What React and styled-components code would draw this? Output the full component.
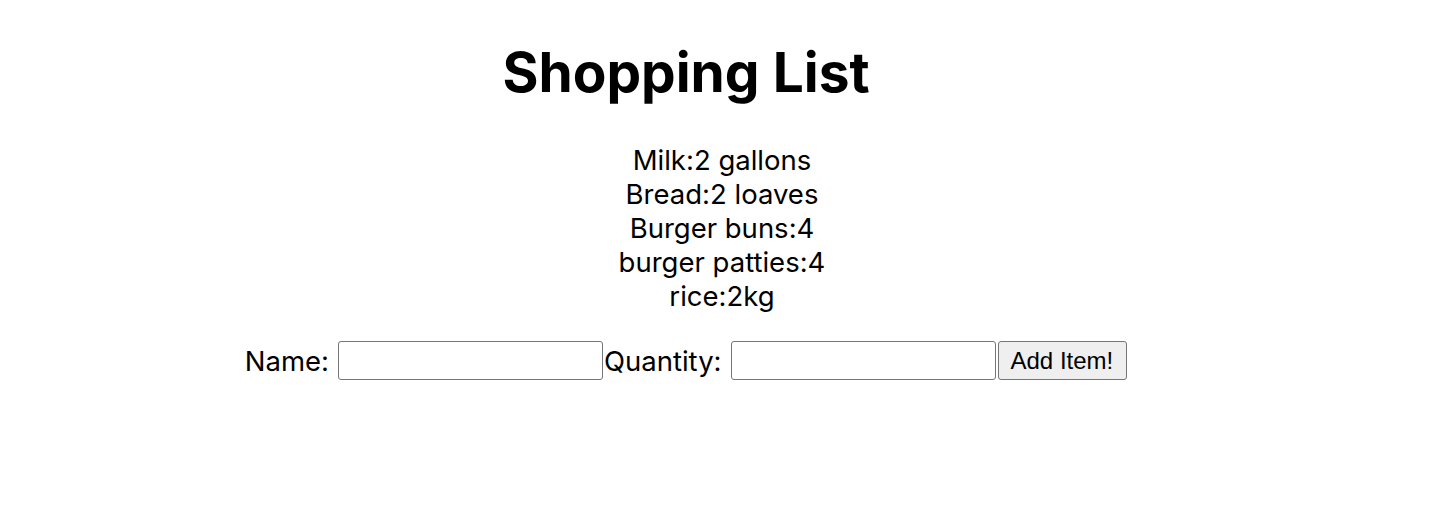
import React, { useState } from "react";
import styled, { createGlobalStyle } from "styled-components";

const GlobalStyle = createGlobalStyle`
  body {
    margin: 0;
    background: #fff;
    color: #000;
    font-family: Inter, "Noto Sans", sans-serif;
  }
`;

export default function App() {
  const [items, setItems] = useState([
    { name: "Milk", quantity: "2 gallons" },
    { name: "Bread", quantity: "2 loaves" },
    { name: "Burger buns", quantity: "4" },
    { name: "burger patties", quantity: "4" },
    { name: "rice", quantity: "2kg" },
  ]);
  const [name, setName] = useState("");
  const [quantity, setQuantity] = useState("");

  const addItem = (e) => {
    e.preventDefault();
    if (!name) return;
    setItems([...items, { name, quantity }]);
    setName("");
    setQuantity("");
  };

  return (
    <Page>
      <GlobalStyle />
      <Title>Shopping List</Title>
      <ItemList>
        {items.map((item, i) => (
          <Item key={i}>
            {item.name}:{item.quantity}
          </Item>
        ))}
      </ItemList>
      <Form onSubmit={addItem}>
        <Label htmlFor="name">Name:</Label>
        <Input id="name" value={name} onChange={(e) => setName(e.target.value)} />
        <Label htmlFor="quantity">Quantity:</Label>
        <Input
          id="quantity"
          value={quantity}
          onChange={(e) => setQuantity(e.target.value)}
        />
        <Button type="submit">Add Item!</Button>
      </Form>
    </Page>
  );
}

const Page = styled.div`
  width: 1372px;
  display: flex;
  flex-direction: column;
  align-items: center;
`;

const Title = styled.h1`
  font-size: 55px;
  font-weight: 700;
  margin: 38px 0 0;
  line-height: 68px;
`;

const ItemList = styled.ul`
  list-style: none;
  margin: 37px 0 0;
  padding: 0 0 0 72px;
  text-align: center;
`;

const Item = styled.li`
  font-size: 27.5px;
  line-height: 34px;
`;

const Form = styled.form`
  display: flex;
  align-items: center;
  margin-top: 28px;
`;

const Label = styled.label`
  font-size: 27.5px;
  margin-right: 9px;
`;

const Input = styled.input`
  box-sizing: border-box;
  width: 265px;
  height: 39px;
  border: 1px solid #767676;
  border-radius: 3px;
  padding: 2px 4px;
  font-size: 22px;
  margin: 0 1px 0 0;
`;

const Button = styled.button`
  box-sizing: border-box;
  height: 39px;
  padding: 0 13px 0 12px;
  margin-left: 1px;
  font-family: "Liberation Sans", Arial, sans-serif;
  font-size: 24px;
  background: #efefef;
  border: 1px solid #767676;
  border-radius: 3px;
  color: #000;
`;
